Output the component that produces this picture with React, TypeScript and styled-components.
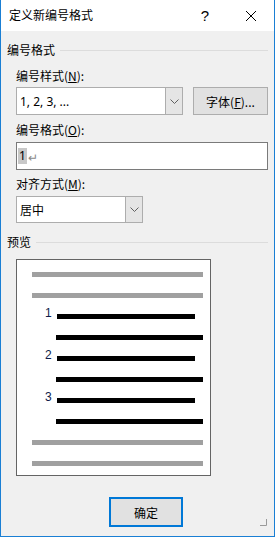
import React from 'react';
import styled, { createGlobalStyle } from 'styled-components';

const GlobalStyle = createGlobalStyle`
  html, body {
    margin: 0;
    padding: 0;
    background: #ffffff;
  }
  * {
    box-sizing: border-box;
  }
`;

const Window = styled.div`
  position: relative;
  width: 275px;
  height: 537px;
  display: flex;
  flex-direction: column;
  border: 1px solid #1a7fd4;
  border-top: none;
  background: #f0f0f0;
  font-family: "Noto Sans CJK SC", "Noto Sans", sans-serif;
  font-size: 12px;
  color: #000;
`;

const TitleBar = styled.div`
  height: 31px;
  flex: none;
  background: #fff;
  display: flex;
  align-items: center;
  padding: 0 0 0 8px;
`;

const TitleText = styled.div`
  flex: 1;
  line-height: 16px;
  margin-top: -1px;
`;

const TitleButton = styled.div`
  width: 46px;
  height: 31px;
  display: flex;
  align-items: center;
  justify-content: center;
  font-family: "Liberation Sans", sans-serif;
  font-size: 15px;
`;

const Body = styled.div`
  flex: 1;
  display: flex;
  flex-direction: column;
  padding: 0 6px;
`;

const SectionHeader = styled.div<{ $top: number }>`
  display: flex;
  align-items: center;
  height: 16px;
  margin-top: ${(p) => p.$top}px;
  line-height: 16px;
`;

const SectionRule = styled.div`
  flex: 1;
  height: 1px;
  background: #dcdcdc;
  margin-left: 5px;
`;

const Indent = styled.div`
  display: flex;
  flex-direction: column;
  padding-left: 9px;
`;

const FieldLabel = styled.div<{ $top: number }>`
  height: 16px;
  line-height: 16px;
  margin-top: ${(p) => p.$top}px;
`;

const Key = styled.span`
  text-decoration: underline;
  text-underline-offset: 1px;
`;

const Row = styled.div<{ $top: number }>`
  display: flex;
  margin-top: ${(p) => p.$top}px;
`;

const Combo = styled.div<{ $width: number; $height: number }>`
  width: ${(p) => p.$width}px;
  height: ${(p) => p.$height}px;
  display: flex;
  border: 1px solid #adadad;
  background: #fff;
`;

const ComboValue = styled.div`
  flex: 1;
  display: flex;
  align-items: center;
  padding-left: 3px;
  font-family: "Noto Sans", "Noto Sans CJK SC", sans-serif;
`;

const ComboArrow = styled.div`
  width: 17px;
  border-left: 1px solid #adadad;
  background: #e5e5e5;
  display: flex;
  align-items: center;
  justify-content: center;
`;

const PushButton = styled.div`
  width: 75px;
  height: 28px;
  margin-left: 10px;
  border: 1px solid #adadad;
  background: #e1e1e1;
  display: flex;
  align-items: center;
  justify-content: center;
`;

const TextBox = styled.div<{ $width: number }>`
  width: ${(p) => p.$width}px;
  height: 28px;
  border: 1px solid #7a7a7a;
  background: #fff;
  display: flex;
  align-items: center;
  padding-left: 1px;
`;

const Selected = styled.span`
  background: #c8c8c8;
  font-family: "Noto Sans", sans-serif;
  line-height: 16px;
  padding: 0 1px;
`;

const Mark = styled.span`
  color: #8a8a8a;
  font-size: 12px;
  line-height: 12px;
  margin-left: 1px;
  margin-top: 2px;
`;

const Preview = styled.div`
  width: 195px;
  height: 217px;
  margin-top: 9px;
  border: 1px solid #646464;
  background: #fff;
  display: flex;
  flex-direction: column;
  padding-top: 12px;
`;

const Line = styled.div`
  display: flex;
  align-items: flex-end;
  height: 5px;
  margin-bottom: 16px;
`;

const Bar = styled.div<{ $gray?: boolean; $left: number; $width: number }>`
  height: 5px;
  margin-left: ${(p) => p.$left}px;
  width: ${(p) => p.$width}px;
  background: ${(p) => (p.$gray ? '#a0a0a0' : '#000')};
`;

const Num = styled.span`
  width: 40px;
  padding-left: 28px;
  height: 14px;
  line-height: 14px;
  margin-bottom: -1px;
  font-family: "Liberation Sans", sans-serif;
  font-size: 12px;
  color: #0d1c4a;
`;

const Footer = styled.div`
  display: flex;
  margin-top: 21px;
  padding-left: 102px;
`;

const DefaultButton = styled.div`
  width: 74px;
  height: 30px;
  border: 2px solid #0078d7;
  background: #e1e1e1;
  display: flex;
  align-items: center;
  justify-content: center;
`;

const Grip = styled.svg`
  position: absolute;
  right: 7px;
  bottom: 10px;
`;

const Chevron = () => (
  <svg width="9" height="5" viewBox="0 0 9 5">
    <path d="M0.5 0.5 L4.5 4.5 L8.5 0.5" fill="none" stroke="#606060" strokeWidth="1" />
  </svg>
);

const App: React.FC = () => {
  const numbered = ['1', '2', '3'];

  return (
    <>
      <GlobalStyle />
      <Window>
        <TitleBar>
          <TitleText>定义新编号格式</TitleText>
          <TitleButton>?</TitleButton>
          <TitleButton>
            <svg width="10" height="10" viewBox="0 0 10 10">
              <path d="M0 0 L10 10 M10 0 L0 10" stroke="#000" strokeWidth="1" />
            </svg>
          </TitleButton>
        </TitleBar>
        <Body>
          <SectionHeader $top={11}>
            编号格式
            <SectionRule />
          </SectionHeader>
          <Indent>
            <FieldLabel $top={10}>
              编号样式(<Key>N</Key>):
            </FieldLabel>
            <Row $top={3}>
              <Combo $width={167} $height={28}>
                <ComboValue>1, 2, 3, ...</ComboValue>
                <ComboArrow>
                  <Chevron />
                </ComboArrow>
              </Combo>
              <PushButton>
                字体(<Key>F</Key>)...
              </PushButton>
            </Row>
            <FieldLabel $top={7}>
              编号格式(<Key>O</Key>):
            </FieldLabel>
            <Row $top={4}>
              <TextBox $width={252}>
                <Selected>1</Selected>
                <Mark>↵</Mark>
              </TextBox>
            </Row>
            <FieldLabel $top={6}>
              对齐方式(<Key>M</Key>):
            </FieldLabel>
            <Row $top={4}>
              <Combo $width={127} $height={27}>
                <ComboValue>居中</ComboValue>
                <ComboArrow>
                  <Chevron />
                </ComboArrow>
              </Combo>
            </Row>
          </Indent>
          <SectionHeader $top={11}>
            预览
            <SectionRule />
          </SectionHeader>
          <Indent>
            <Preview>
              <Line>
                <Bar $gray $left={15} $width={171} />
              </Line>
              <Line>
                <Bar $gray $left={15} $width={171} />
              </Line>
              {numbered.map((n) => (
                <React.Fragment key={n}>
                  <Line>
                    <Num>{n}</Num>
                    <Bar $left={0} $width={138} />
                  </Line>
                  <Line>
                    <Bar $left={39} $width={147} />
                  </Line>
                </React.Fragment>
              ))}
              <Line>
                <Bar $gray $left={15} $width={171} />
              </Line>
              <Line>
                <Bar $gray $left={15} $width={171} />
              </Line>
            </Preview>
          </Indent>
          <Footer>
            <DefaultButton>确定</DefaultButton>
          </Footer>
        </Body>
        <Grip width="7" height="7" viewBox="0 0 7 7">
          <path d="M6.5 0 L6.5 6.5 L0 6.5" fill="none" stroke="#9a9a9a" strokeWidth="1" />
        </Grip>
      </Window>
    </>
  );
};

export default App;
